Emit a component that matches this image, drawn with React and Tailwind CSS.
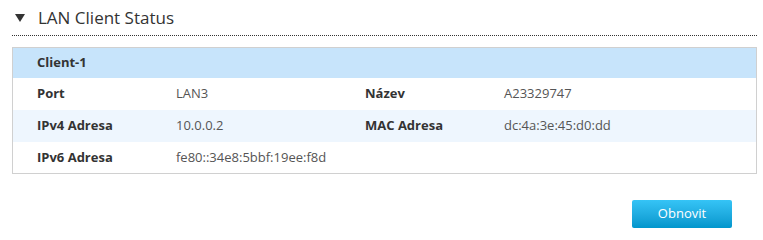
import React from "react";

const rows = [
  { l1: "Port", v1: "LAN3", l2: "Název", v2: "A23329747" },
  { l1: "IPv4 Adresa", v1: "10.0.0.2", l2: "MAC Adresa", v2: "dc:4a:3e:45:d0:dd" },
  { l1: "IPv6 Adresa", v1: "fe80::34e8:5bbf:19ee:f8d", l2: "", v2: "" },
];

const App = () => {
  return (
    <div className="w-[763px] h-[238px] bg-white text-[#333] font-['Open_Sans',sans-serif]">
      {/* Section title */}
      <div className="flex items-center h-[35px] pl-[15px]">
        <span className="w-0 h-0 border-l-[5px] border-r-[5px] border-t-[8px] border-l-transparent border-r-transparent border-t-[#333] mt-[1px]" />
        <h2 className="ml-[13px] text-[17px] leading-none text-[#333] -mt-[1px]">LAN Client Status</h2>
      </div>
      <div className="ml-[12px] mr-[6px] border-t border-dotted border-[#333]" />

      {/* Client table */}
      <div className="ml-[12px] mr-[6px] mt-[11px] border border-[#d0d0d0]">
        <div className="h-[30px] bg-[#c7e4fb] flex items-center pl-[24px] text-[13px] font-bold">Client-1</div>
        {rows.map((r, i) => (
          <div
            key={r.l1}
            className={`flex items-center text-[13px] ${i === 1 ? "h-[32px] bg-[#eef6fe]" : i === 2 ? "h-[31px] bg-white" : "h-[32px] bg-white"}`}
          >
            <div className="w-[163px] pl-[24px] font-bold text-[#333]">{r.l1}</div>
            <div className="w-[189px] text-[#555]">{r.v1}</div>
            <div className="w-[139px] font-bold text-[#333]">{r.l2}</div>
            <div className="text-[#555]">{r.v2}</div>
          </div>
        ))}
      </div>

      <div className="flex justify-end mr-[31px] mt-[26px]">
        <button className="w-[100px] h-[28px] rounded-[2px] bg-gradient-to-b from-[#35c4f6] to-[#0096cc] text-white text-[13px]">
          Obnovit
        </button>
      </div>
    </div>
  );
};

export default App;
